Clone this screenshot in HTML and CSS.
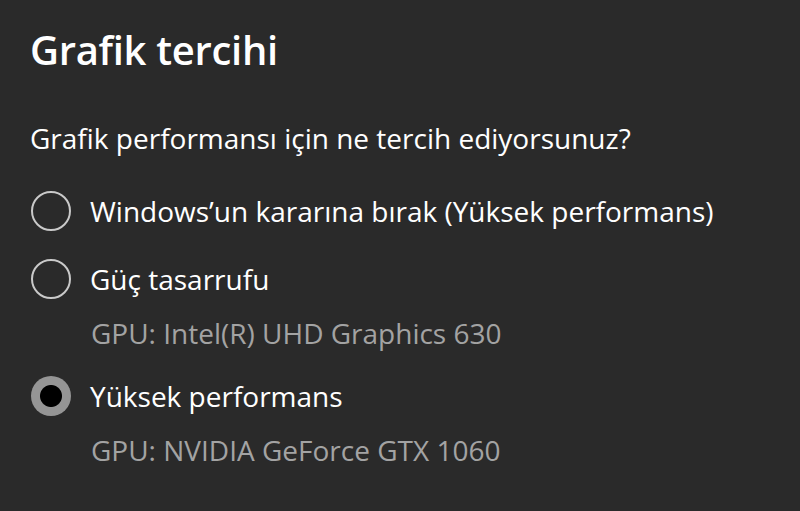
FILE: index.html
```html
<!DOCTYPE html>
<html lang="tr">
<head>
<meta charset="utf-8">
<title>Grafik tercihi</title>
<link rel="stylesheet" href="styles.css">
</head>
<body>
<main class="panel">
  <h1 class="title">Grafik tercihi</h1>
  <p class="question">Grafik performansı için ne tercih ediyorsunuz?</p>
  <ul class="options">
    <li class="option option-first">
      <span class="radio"></span>
      <span class="label">Windows’un kararına bırak (Yüksek performans)</span>
    </li>
    <li class="option">
      <span class="radio"></span>
      <span class="label">Güç tasarrufu</span>
      <span class="gpu">GPU: Intel(R) UHD Graphics 630</span>
    </li>
    <li class="option">
      <span class="radio radio-checked"></span>
      <span class="label">Yüksek performans</span>
      <span class="gpu">GPU: NVIDIA GeForce GTX 1060</span>
    </li>
  </ul>
</main>
</body>
</html>
```

FILE: styles.css
```css
html, body {
  margin: 0;
  padding: 0;
  background: #2a2a2a;
}

body {
  width: 800px;
  height: 511px;
  overflow: hidden;
  font-family: "Open Sans", "Noto Sans", sans-serif;
  color: #ffffff;
}

.panel {
  padding: 22px 0 0 30px;
}

.title {
  margin: 0;
  font-size: 40px;
  font-weight: 600;
  line-height: 56px;
  letter-spacing: -0.3px;
}

.question {
  margin: 42px 0 0 0;
  font-size: 28px;
  line-height: 36px;
}

.options {
  list-style: none;
  margin: 35px 0 0 0;
  padding: 0;
  display: flex;
  flex-direction: column;
  gap: 25px;
}

.option {
  display: grid;
  grid-template-columns: 40px auto;
  column-gap: 20px;
  align-items: center;
}

.option-first {
  margin-bottom: 3px;
}

.radio {
  grid-column: 1;
  grid-row: 1;
  width: 40px;
  height: 40px;
  box-sizing: border-box;
  margin-left: 1px;
  border: 2.5px solid #c9c9c9;
  border-radius: 50%;
}

.radio-checked {
  border: none;
  background: radial-gradient(circle, #000 0 10.5px, #959595 11.5px);
}

.label {
  grid-column: 2;
  grid-row: 1;
  font-size: 28px;
  line-height: 40px;
}

.gpu {
  grid-column: 2;
  grid-row: 2;
  margin-top: 16px;
  margin-left: 1px;
  font-size: 28px;
  line-height: 36px;
  color: #a3a3a3;
}
```
